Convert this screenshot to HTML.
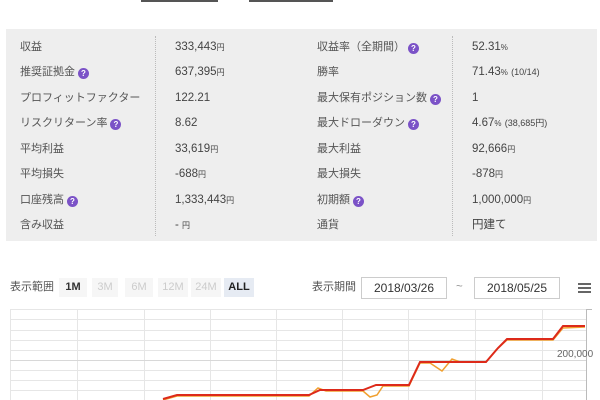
<!DOCTYPE html>
<html><head><meta charset="utf-8"><style>
body{margin:0;width:600px;height:400px;overflow:hidden;background:#fff;font-family:"Liberation Sans","Noto Sans CJK JP",sans-serif;color:#444;position:relative}
.bar{position:absolute;top:0;height:2px;background:#555}
.tbl{position:absolute;left:6px;top:29px;width:591px;height:212px;background:#eeeeee}
.r{position:absolute;font-size:11.5px;line-height:14px;white-space:nowrap}
.l{color:#555;font-size:11px}
.q{display:inline-block;width:11px;height:11px;border-radius:50%;background:#7b52c7;color:#fff;font-size:8px;line-height:11px;text-align:center;vertical-align:-1px;margin-left:3px;font-weight:bold}
.u{font-size:8px}
.s{font-size:9px}
.dv{position:absolute;top:36px;height:200px;border-left:1px dotted #bbb}
.btn{position:absolute;top:278px;height:19px;font-size:11px;line-height:19px;text-align:center;color:#ccc;background:#f6f6f6}
.dt{position:absolute;top:277px;height:20px;border:1px solid #ccc;font-size:12px;line-height:20px;text-align:center;color:#333}
</style></head><body>
<div class="bar" style="left:141px;width:77px"></div>
<div class="bar" style="left:249px;width:84px"></div>
<div class="tbl"></div>
<div class="dv" style="left:155px"></div>
<div class="dv" style="left:452px"></div>
<div class="r l" style="left:20px;top:40px">収益</div><div class="r" style="left:175px;top:40px">333,443<span class="u">円</span></div>
<div class="r l" style="left:20px;top:65px">推奨証拠金<span class="q">?</span></div><div class="r" style="left:175px;top:65px">637,395<span class="u">円</span></div>
<div class="r l" style="left:20px;top:91px">プロフィットファクター</div><div class="r" style="left:175px;top:91px">122.21</div>
<div class="r l" style="left:20px;top:116px">リスクリターン率<span class="q">?</span></div><div class="r" style="left:175px;top:116px">8.62</div>
<div class="r l" style="left:20px;top:142px">平均利益</div><div class="r" style="left:175px;top:142px">33,619<span class="u">円</span></div>
<div class="r l" style="left:20px;top:167px">平均損失</div><div class="r" style="left:175px;top:167px">-688<span class="u">円</span></div>
<div class="r l" style="left:20px;top:193px">口座残高<span class="q">?</span></div><div class="r" style="left:175px;top:193px">1,333,443<span class="u">円</span></div>
<div class="r l" style="left:20px;top:218px">含み収益</div><div class="r" style="left:175px;top:218px">- <span class="u">円</span></div>

<div class="r l" style="left:317px;top:40px">収益率（全期間）<span class="q">?</span></div><div class="r" style="left:472px;top:40px">52.31<span class="u">%</span></div>
<div class="r l" style="left:317px;top:65px">勝率</div><div class="r" style="left:472px;top:65px">71.43<span class="u">%</span> <span class="s">(10/14)</span></div>
<div class="r l" style="left:317px;top:91px">最大保有ポジション数<span class="q">?</span></div><div class="r" style="left:472px;top:91px">1</div>
<div class="r l" style="left:317px;top:116px">最大ドローダウン<span class="q">?</span></div><div class="r" style="left:472px;top:116px">4.67<span class="u">%</span> <span class="s">(38,685円)</span></div>
<div class="r l" style="left:317px;top:142px">最大利益</div><div class="r" style="left:472px;top:142px">92,666<span class="u">円</span></div>
<div class="r l" style="left:317px;top:167px">最大損失</div><div class="r" style="left:472px;top:167px">-878<span class="u">円</span></div>
<div class="r l" style="left:317px;top:193px">初期額<span class="q">?</span></div><div class="r" style="left:472px;top:193px">1,000,000<span class="u">円</span></div>
<div class="r l" style="left:317px;top:218px">通貨</div><div class="r" style="left:472px;top:218px">円建て</div>

<div class="r l" style="left:10px;top:280px;font-size:11px">表示範囲</div>
<div class="btn" style="left:59px;width:28px;color:#333;font-weight:bold">1M</div>
<div class="btn" style="left:92px;width:26px">3M</div>
<div class="btn" style="left:125px;width:28px">6M</div>
<div class="btn" style="left:158px;width:30px">12M</div>
<div class="btn" style="left:191px;width:30px">24M</div>
<div class="btn" style="left:224px;width:30px;color:#222;font-weight:bold;background:#e6ebf3">ALL</div>
<div class="r l" style="left:312px;top:280px;font-size:11px">表示期間</div>
<div class="dt" style="left:361px;width:84px">2018/03/26</div>
<div class="r" style="left:456px;top:280px;color:#999">~</div>
<div class="dt" style="left:474px;width:84px">2018/05/25</div>
<div style="position:absolute;left:578px;top:283px;width:13px;height:2px;background:#666;box-shadow:0 4px 0 #666,0 8px 0 #666"></div>

<svg style="position:absolute;left:0;top:0" width="600" height="400">
<g stroke="#e6e6e6" stroke-width="1">
<line x1="10" y1="309.5" x2="586" y2="309.5"/><line x1="10" y1="319.5" x2="586" y2="319.5"/><line x1="10" y1="330.5" x2="586" y2="330.5"/><line x1="10" y1="340.5" x2="586" y2="340.5"/><line x1="10" y1="350.5" x2="586" y2="350.5"/><line x1="10" y1="370.5" x2="586" y2="370.5"/><line x1="10" y1="380.5" x2="586" y2="380.5"/><line x1="10" y1="390.5" x2="586" y2="390.5"/>
<line x1="10.5" y1="309" x2="10.5" y2="400"/><line x1="77.5" y1="309" x2="77.5" y2="400"/><line x1="144.5" y1="309" x2="144.5" y2="400"/><line x1="210.5" y1="309" x2="210.5" y2="400"/><line x1="276.5" y1="309" x2="276.5" y2="400"/><line x1="342.5" y1="309" x2="342.5" y2="400"/><line x1="408.5" y1="309" x2="408.5" y2="400"/><line x1="475.5" y1="309" x2="475.5" y2="400"/><line x1="542.5" y1="309" x2="542.5" y2="400"/>
</g>
<line x1="10" y1="360.5" x2="586" y2="360.5" stroke="#d8d8d8"/>
<line x1="586.5" y1="309" x2="586.5" y2="400" stroke="#bbb"/>
<line x1="586" y1="309.5" x2="592" y2="309.5" stroke="#bbb"/>
<text x="557" y="357" font-size="10" fill="#666" font-family="Liberation Sans">200,000</text>
<polyline fill="none" stroke="#f0a030" stroke-width="1.5" points="163,400 177,396 309,396 318,388 326,391 363,391 370,397 377,395 383,386 409,386 420,363 430,363 442,371 452,359 460,362 486,362 496,350 507,340 553,340 563,328 585,327"/>
<polyline fill="none" stroke="#dd2a1a" stroke-width="2" points="163,399 177,395 309,395 320,390 363,390 376,385 409,385 420,362 486,362 498,348 507,339 553,339 563,326 585,326"/>
</svg>
</body></html>
